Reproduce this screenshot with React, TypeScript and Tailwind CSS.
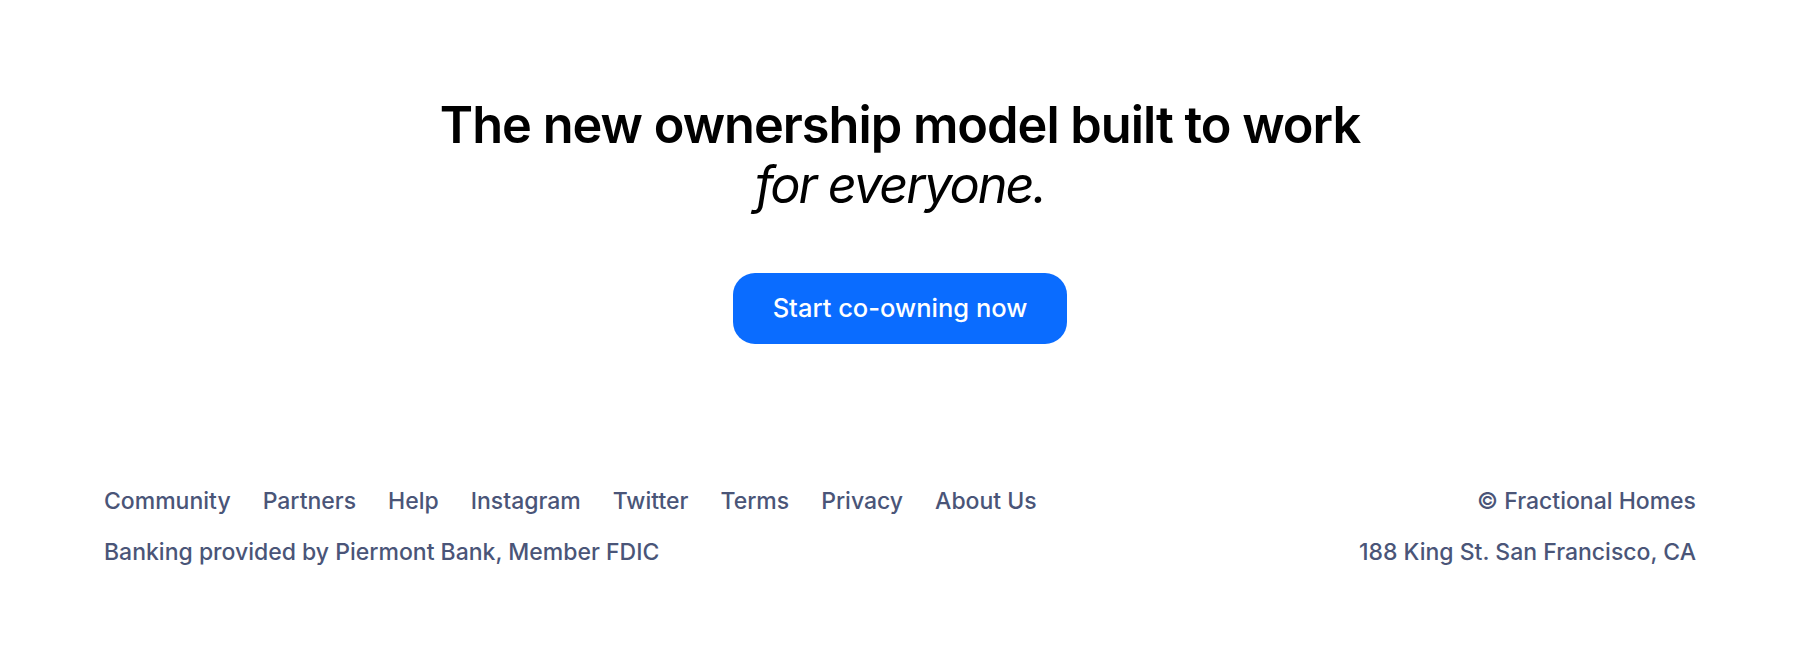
const links = ["Community", "Partners", "Help", "Instagram", "Twitter", "Terms", "Privacy", "About Us"];

export default function App() {
  return (
    <div className="min-h-[670px] bg-white font-['Inter',sans-serif]">
      <section className="flex flex-col items-center pt-[95px]">
        <h2 className="text-center text-[50.5px] leading-[60px] text-black">
          <span className="block font-semibold tracking-[-0.02em]">The new ownership model built to work</span>
          <span className="block font-normal italic tracking-[-0.04em]">for everyone.</span>
        </h2>
        <a
          href="#"
          className="mt-[58px] flex h-[71px] items-center rounded-[22px] bg-[#0a6cff] px-10 text-[25.5px] font-medium text-white"
        >
          Start co-owning now
        </a>
      </section>
      <footer className="mt-[143px] px-[104px] text-[23px] font-medium leading-7 text-[#4a5578]">
        <div className="flex justify-between">
          <nav className="flex gap-8">
            {links.map((l) => (
              <a key={l} href="#">
                {l}
              </a>
            ))}
          </nav>
          <span>© Fractional Homes</span>
        </div>
        <div className="mt-[23px] flex justify-between">
          <span>Banking provided by Piermont Bank, Member FDIC</span>
          <span>188 King St. San Francisco, CA</span>
        </div>
      </footer>
    </div>
  );
}
